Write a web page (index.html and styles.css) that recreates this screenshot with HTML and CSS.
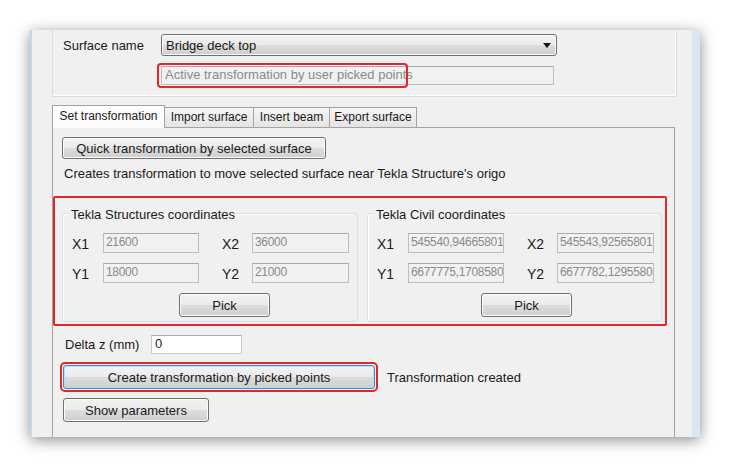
FILE: index.html
```html
<!DOCTYPE html>
<html>
<head>
<meta charset="utf-8">
<link rel="stylesheet" href="styles.css">
</head>
<body>
<div class="window">
  <div class="top-panel">
    <div class="row">
      <span class="lbl surface-lbl">Surface name</span>
      <div class="combo">
        <span class="combo-text">Bridge deck top</span>
        <svg class="combo-arrow" width="8" height="5" viewBox="0 0 8 5"><path d="M0 0H8L4 5Z" fill="#111"/></svg>
      </div>
    </div>
    <div class="row row2">
      <div class="status-wrap">
        <div class="textbox disabled status">Active transformation by user picked points</div>
        <div class="mark mark-status"></div>
      </div>
    </div>
  </div>

  <div class="tabs">
    <div class="tabstrip">
      <div class="tab active w1">Set transformation</div>
      <div class="tab w2">Import surface</div>
      <div class="tab w3">Insert beam</div>
      <div class="tab w4">Export surface</div>
    </div>
    <div class="tabpage">
      <button class="btn quick">Quick transformation by selected surface</button>
      <p class="desc">Creates transformation to move selected surface near Tekla Structure's origo</p>

      <div class="coords">
        <div class="group g-left">
          <div class="g-title"><span>Tekla Structures coordinates</span></div>
          <div class="grid">
            <span class="lbl">X1</span><div class="textbox disabled val">21600</div>
            <span class="lbl lbl2">X2</span><div class="textbox disabled val">36000</div>
            <span class="lbl">Y1</span><div class="textbox disabled val">18000</div>
            <span class="lbl lbl2">Y2</span><div class="textbox disabled val">21000</div>
          </div>
          <button class="btn pick pick-left">Pick</button>
        </div>
        <div class="group g-right">
          <div class="g-title"><span>Tekla Civil coordinates</span></div>
          <div class="grid">
            <span class="lbl">X1</span><div class="textbox disabled val">545540,94665801</div>
            <span class="lbl lbl2">X2</span><div class="textbox disabled val">545543,92565801</div>
            <span class="lbl">Y1</span><div class="textbox disabled val">6677775,1708580</div>
            <span class="lbl lbl2">Y2</span><div class="textbox disabled val">6677782,1295580</div>
          </div>
          <button class="btn pick pick-right">Pick</button>
        </div>
      </div>

      <div class="delta-row">
        <span class="lbl delta-lbl">Delta z (mm)</span>
        <div class="textbox white delta">0</div>
      </div>

      <div class="create-row">
        <div class="create-mark">
          <button class="btn create">Create transformation by picked points</button>
        </div>
        <span class="lbl created">Transformation created</span>
      </div>

      <button class="btn show">Show parameters</button>
    </div>
  </div>
</div>
</body>
</html>
```

FILE: styles.css
```css
html, body {
  margin: 0;
  padding: 0;
  background: #ffffff;
  width: 730px;
  height: 468px;
  overflow: hidden;
  font-family: "Liberation Sans", Arial, sans-serif;
  font-size: 13px;
  color: #1a1a1a;
}

.window {
  margin: 30px 0 0 30px;
  width: 670px;
  height: 407px;
  box-sizing: border-box;
  border-left: 2px solid #c3d6ec;
  border-right: 8px solid #dbe6f4;
  background: #f0f0f0;
  overflow: hidden;
  box-shadow: 0 3px 14px rgba(0, 0, 0, 0.45);
}

/* Top panel */
.top-panel {
  margin-left: 20px;
  width: 625px;
  height: 67px;
  box-sizing: border-box;
  border: 1px solid #d5dfe5;
  border-top: none;
  box-shadow: inset -1px -1px 0 #ffffff;
  padding: 4px 0 0 10px;
}

.row {
  display: flex;
  align-items: center;
}

.row2 {
  margin-top: 10px;
  padding-left: 98px;
}

.lbl {
  white-space: nowrap;
  line-height: 15px;
}

.surface-lbl {
  width: 98px;
}

.combo {
  width: 396px;
  height: 22px;
  box-sizing: border-box;
  border: 1px solid #707070;
  border-radius: 3px;
  background: linear-gradient(#f2f2f2 0%, #ebebeb 50%, #dddddd 50%, #cfcfcf 100%);
  box-shadow: inset 0 0 0 1px #fbfbfb;
  display: flex;
  align-items: center;
  justify-content: space-between;
  padding: 0 5px 0 4px;
}

.combo-text {
  line-height: 15px;
}

.combo-arrow {
  display: block;
}

.status-wrap {
  position: relative;
}

.textbox {
  box-sizing: border-box;
  height: 20px;
  line-height: 17px;
  padding: 0 3px;
  white-space: nowrap;
  overflow: hidden;
  border: 1px solid #bdbdbd;
  border-top-color: #a9a9a9;
}

.textbox.disabled {
  background: #f1f1f1;
  color: #8a8a8a;
}

.textbox.val {
  font-size: 12px;
  letter-spacing: -0.3px;
  padding: 0 2px;
}

.textbox.white {
  background: #ffffff;
  color: #1e1e1e;
  border-color: #c9cbd0;
  border-top-color: #abadb3;
}

.status {
  width: 393px;
  height: 19px;
  line-height: 16px;
}

.mark-status {
  position: absolute;
  left: -4px;
  top: -3px;
  width: 251px;
  height: 25px;
  box-sizing: border-box;
  border: 2px solid #e1262c;
  border-radius: 4px;
}

/* Tabs */
.tabs {
  margin: 8px 0 0 20px;
  width: 623px;
}

.tabstrip {
  display: flex;
  align-items: flex-end;
  height: 22px;
}

.tab {
  box-sizing: border-box;
  height: 20px;
  border: 1px solid #a3a3a3;
  border-bottom: none;
  background: linear-gradient(#f5f5f5, #e4e4e4);
  font-size: 12px;
  line-height: 19px;
  text-align: center;
  white-space: nowrap;
  margin-left: -1px;
}

.tab.active {
  height: 23px;
  margin-bottom: -1px;
  margin-left: 0;
  background: #fcfcfc;
  position: relative;
  z-index: 1;
  line-height: 21px;
}

.w1 { width: 113px; }
.w2 { width: 90px; }
.w3 { width: 77px; }
.w4 { width: 88px; }

.tabpage {
  box-sizing: border-box;
  height: 320px;
  border: 1px solid #a3a3a3;
  border-bottom: none;
  background: #f0f0f0;
  padding: 9px 0 0 9px;
}

.btn {
  display: block;
  box-sizing: border-box;
  padding: 0;
  margin: 0;
  font-family: "Liberation Sans", Arial, sans-serif;
  font-size: 13px;
  color: #1a1a1a;
  border: 1px solid #707070;
  border-radius: 3px;
  background: linear-gradient(#f2f2f2 0%, #ebebeb 50%, #dddddd 50%, #cfcfcf 100%);
  box-shadow: inset 0 0 0 1px #fbfbfb;
  text-align: center;
}

.quick {
  width: 264px;
  height: 22px;
}

.desc {
  margin: 7px 0 0 2px;
  line-height: 15px;
}

.coords {
  margin: 15px 0 0 -9px;
  width: 614px;
  height: 130px;
  box-sizing: border-box;
  border: 2px solid #e1262c;
  border-radius: 2px;
  padding: 15px 3px 2px 7px;
  display: flex;
  gap: 9px;
}

.group {
  box-sizing: border-box;
  border: 1px solid #d5dfe5;
  border-radius: 3px;
  box-shadow: inset 1px 1px 0 #ffffff;
  padding: 0 9px;
}

.g-left { width: 296px; }
.g-right { width: 295px; }

.g-title {
  height: 15px;
  margin-top: -7px;
  line-height: 15px;
}

.g-title span {
  background: #f0f0f0;
  padding: 0 2px;
  margin-left: -3px;
  white-space: nowrap;
}

.grid {
  margin-top: 11px;
  display: grid;
  grid-template-columns: 31px 96px 53px 97px;
  grid-template-rows: 20px 20px;
  row-gap: 10px;
  align-items: center;
}

.grid .lbl {
  font-size: 14px;
  padding-top: 3px;
}

.lbl2 {
  padding-left: 23px;
}

.pick {
  margin-top: 10px;
  width: 91px;
  height: 24px;
}

.pick-left { margin-left: 107px; }
.pick-right { margin-left: 104px; }

.delta-row {
  margin: 9px 0 0 3px;
  display: flex;
  align-items: center;
}

.delta-lbl {
  width: 86px;
}

.delta {
  width: 91px;
  height: 19px;
  line-height: 16px;
}

.create-row {
  margin: 8px 0 0 -2px;
  display: flex;
  align-items: center;
}

.create-mark {
  box-sizing: border-box;
  width: 318px;
  height: 30px;
  border: 2px solid #e1262c;
  border-radius: 5px;
  padding: 1px;
}

.create {
  width: 312px;
  height: 24px;
  border-color: #3c8fc4;
  box-shadow: inset 0 0 0 1px #b5dff6;
}

.created {
  margin-left: 9px;
}

.show {
  margin: 6px 0 0 1px;
  width: 146px;
  height: 24px;
}
```
